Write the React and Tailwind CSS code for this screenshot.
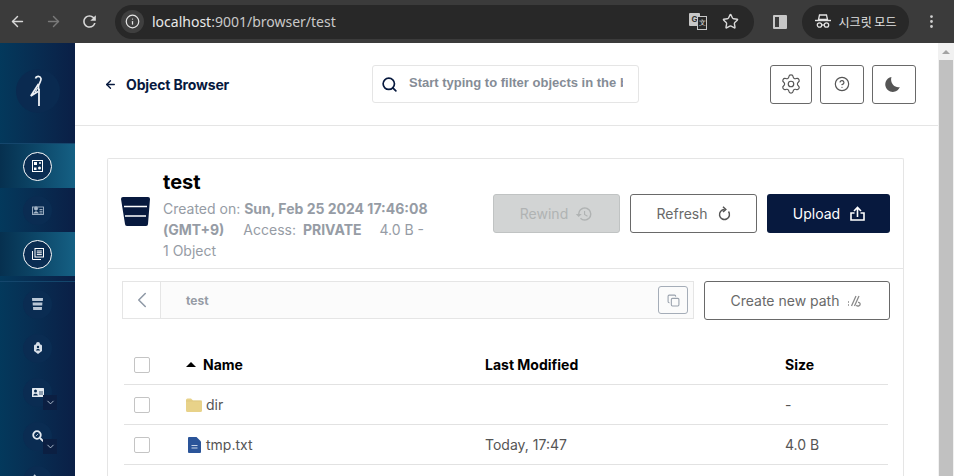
import React from 'react';
import { ArrowLeft, ArrowRight, Info, Star, Settings, CircleHelp, Search, ChevronLeft, ChevronDown, EllipsisVertical, Copy } from 'lucide-react';

const ReloadIcon = ({ size, color }) => (
  <svg width={size} height={size} viewBox="0 0 24 24" fill={color}>
    <path d="M17.65 6.35A7.958 7.958 0 0 0 12 4c-4.42 0-7.99 3.58-7.99 8s3.57 8 7.99 8c3.73 0 6.84-2.55 7.73-6h-2.08A5.99 5.99 0 0 1 12 18c-3.31 0-6-2.69-6-6s2.69-6 6-6c1.66 0 3.14.69 4.22 1.78L13 11h7V4l-2.35 2.35z" />
  </svg>
);

const Bird = () => (
  <svg width="16" height="31" viewBox="0 0 16 31" fill="none" stroke="#eef2f6" strokeWidth="1.700">
    <path d="M5.500 3.500C6 1 10 .5 11 3.500c.6 2.500-2 4.500-2.500 7.500-.2 1.500 0 2.500.5 4" />
    <path d="M9 31V14" strokeWidth="1.800" />
    <path d="M8.500 9 .8 21 8 16.500" />
    <path d="M7.500 13 5 17.500" strokeWidth="1.200" />
  </svg>
);

const Glyph = ({ kind }) => {
  if (kind === 'cluster') return (
    <svg width="11" height="12" viewBox="0 0 11 12" fill="none">
      <rect x=".5" y=".5" width="10" height="11" stroke="#fff" strokeWidth="1" />
      <rect x="2" y="2" width="3" height="3" fill="#fff" />
      <circle cx="8" cy="3" r="1" fill="#fff" />
      <rect x="2" y="7.500" width="2.500" height="2.500" fill="#fff" />
      <circle cx="7.500" cy="8" r="1.500" fill="#fff" />
    </svg>
  );
  if (kind === 'id') return (
    <svg width="12" height="10" viewBox="0 0 12 10" fill="none" stroke="#a9b9ca" strokeWidth=".9">
      <rect x=".5" y="2" width="11" height="7.500" />
      <circle cx="4" cy="3.500" r="1.600" fill="#a9b9ca" />
      <path d="M1.800 8.500c0-2.200 4.400-2.200 4.400 0" fill="#a9b9ca" />
      <path d="M7.500 4.500h3M7.500 6.300h3M7.500 8h3" />
    </svg>
  );
  if (kind === 'docs') return (
    <svg width="12" height="12" viewBox="0 0 12 12" fill="none" stroke="#fff" strokeWidth="1">
      <rect x="3" y=".5" width="8.500" height="8.500" />
      <path d="M.5 3v8.500H9" />
      <path d="M4.800 3h5M4.800 4.800h5M4.800 6.600h5" />
    </svg>
  );
  if (kind === 'bucket') return (
    <svg width="11" height="12" viewBox="0 0 11 12" fill="#b9c7d6">
      <path d="M0 0h11l-.2 3H.2z" />
      <path d="M.6 4.500h9.800l-.2 3H.8z" />
      <path d="M1 9h9l-.2 3H1.200z" />
    </svg>
  );
  if (kind === 'lock') return (
    <svg width="8" height="12" viewBox="0 0 8 12" fill="#d6dfe8">
      <path d="M2 2.500V2a2 2 0 0 1 4 0v.5h1L8 3.500V9l-4 3-4-3V3.500l1-1z" />
      <circle cx="4" cy="5" r="1.200" fill="#07294d" />
      <path d="M2 8.500c0-2 4-2 4 0z" fill="#07294d" />
    </svg>
  );
  if (kind === 'card') return (
    <svg width="12" height="9" viewBox="0 0 12 9">
      <rect width="12" height="9" rx=".5" fill="#e4eaf0" />
      <circle cx="3.500" cy="3" r="1.500" fill="#07294d" />
      <path d="M1.200 7.500c0-2.400 4.600-2.400 4.600 0z" fill="#07294d" />
      <path d="M7 4h4M7 6h4" stroke="#07294d" strokeWidth=".8" />
    </svg>
  );
  if (kind === 'search') return (
    <svg width="12" height="12" viewBox="0 0 12 12" fill="none">
      <circle cx="5" cy="5" r="3.800" stroke="#e4eaf0" strokeWidth="1.800" />
      <path d="m8 8 3.500 3.500" stroke="#e4eaf0" strokeWidth="1.800" />
      <path d="M3.800 6.200 6.200 3.800" stroke="#e4eaf0" strokeWidth=".8" />
    </svg>
  );
  return (
    <svg width="12" height="12" viewBox="0 0 12 12" fill="none">
      <path d="m2 1 6 6" stroke="#c7d3df" strokeWidth="1.800" />
    </svg>
  );
};

const NavItem = ({ kind, active, dropdown }) => (
  <div className={`relative flex h-11 w-full shrink-0 items-center justify-center ${active ? 'bg-gradient-to-r from-[#06304f] to-[#156084]' : ''}`}>
    <div className={`flex h-[29px] w-[29px] items-center justify-center rounded-full ${active ? 'border-[1.5px] border-white bg-[#0a2d52]' : 'bg-[#0a2c52]'}`}>
      <Glyph kind={kind} />
    </div>
    {dropdown && (
      <div className="absolute left-[43px] top-[25px] flex h-[15px] w-[14px] items-center justify-center bg-[#0b1f42]">
        <ChevronDown size={11} color="#b9c7d6" />
      </div>
    )}
  </div>
);

const Sidebar = () => (
  <aside className="flex w-[75px] shrink-0 flex-col bg-gradient-to-r from-[#03395c] to-[#0a1f46]">
    <div className="flex h-[101px] shrink-0 items-center justify-center border-b border-[#14466c]">
      <div className="mb-[5px] flex h-11 w-11 items-center justify-center rounded-full bg-[#0a2a50]">
        <Bird />
      </div>
    </div>
    <NavItem kind="cluster" active />
    <NavItem kind="id" />
    <NavItem kind="docs" active />
    <div className="mt-[5px] h-px shrink-0 bg-[#14466c]" />
    <NavItem kind="bucket" />
    <NavItem kind="lock" />
    <NavItem kind="card" dropdown />
    <NavItem kind="search" dropdown />
    <NavItem kind="more" />
  </aside>
);

const Toolbar = () => (
  <div className="flex h-[43px] shrink-0 items-center bg-[#3b3b3b] text-[#e3e3e3]">
    <div className="flex w-[115px] items-center pl-[9px]">
      <ArrowLeft size={17} color="#d8d8d8" />
      <ArrowRight size={17} color="#7a7a7a" className="ml-[19px]" />
      <div className="ml-[18px]"><ReloadIcon size={19} color="#d8d8d8" /></div>
    </div>
    <div className="flex h-[34px] w-[639px] items-center rounded-full bg-[#282828] pl-[6px]">
      <div className="flex h-[23px] w-[23px] items-center justify-center rounded-full bg-[#3f3f3f]">
        <Info size={15} color="#e6e6e6" />
      </div>
      <span className="ml-[8px] font-['Noto_Sans',sans-serif] text-[14px] text-[#e8e8e8]">
        localhost<span className="text-[#c8c8c8]">:9001/browser/test</span>
      </span>
      <div className="ml-auto flex items-center pr-[15px]">
        <div className="relative mr-[15px] h-[17px] w-[18px]">
          <div className="h-[13px] w-[11px] rounded-[1px] bg-[#c7c7c7] text-center text-[8px] leading-[13px] font-bold text-[#333]">G</div>
          <div className="absolute left-[8px] top-[3px] h-[14px] w-[10px] border border-[#c7c7c7] bg-[#282828] text-center text-[7px] leading-[12px]">文</div>
        </div>
        <Star size={17} color="#d8d8d8" strokeWidth={2} />
      </div>
    </div>
    <div className="ml-[19px] flex h-[14px] w-[14px] rounded-[1px] border-2 border-[#c7c7c7]">
      <div className="ml-auto h-full w-[6px] bg-[#c7c7c7]" />
    </div>
    <div className="ml-[15px] flex h-[34px] w-[107px] items-center justify-center rounded-full bg-[#282828]">
      <svg width="16" height="15" viewBox="0 0 16 15" fill="none" stroke="#e3e3e3" strokeWidth="1.300">
        <path d="M4.500 1h7l1 4.500h-9z" />
        <path d="M0 6.500h16" strokeWidth="1.400" />
        <circle cx="4.500" cy="11" r="2.200" />
        <circle cx="11.500" cy="11" r="2.200" />
        <path d="M6.700 11h2.600" />
      </svg>
      <span className="ml-[8px] font-['Noto_Sans_CJK_KR',sans-serif] text-[12px] text-[#e3e3e3]">시크릿 모드</span>
    </div>
    <EllipsisVertical size={17} color="#d0d0d0" className="ml-[14px]" />
  </div>
);

const IconButton = ({ children, className }) => (
  <button className={`flex h-[39px] items-center justify-center rounded-[3px] border border-[#696969] bg-white ${className}`}>
    {children}
  </button>
);

const Header = () => (
  <header className="flex h-[83px] shrink-0 items-center border-b border-[#e5e5e5] pl-[29px] pr-[22px]">
    <div className="flex w-[268px] items-center">
      <ArrowLeft size={13} color="#07193e" strokeWidth={2.500} />
      <span className="ml-[9px] text-[14px] font-bold tracking-[-0.15px] text-[#07193e]">Object Browser</span>
    </div>
    <div className="flex h-[38px] w-[267px] items-center overflow-hidden rounded-[3px] border border-[#e5e5e5] pl-[8px]">
      <Search size={17} color="#07193e" strokeWidth={2.400} className="shrink-0" />
      <span className="mb-[2px] ml-[11px] w-[214px] overflow-hidden font-['Liberation_Sans',sans-serif] text-[13px] font-bold whitespace-nowrap text-[#858c96]">
        Start typing to filter objects in the bucket
      </span>
    </div>
    <IconButton className="ml-auto w-[42px]"><Settings size={22} color="#555" strokeWidth={1.300} /></IconButton>
    <IconButton className="ml-[8px] w-[44px]"><CircleHelp size={16} color="#555" strokeWidth={1.800} /></IconButton>
    <IconButton className="ml-[8px] w-[44px]">
      <svg width="15" height="15" viewBox="0 0 15 15" className="mr-[3px]"><path d="M6.500 0a7.500 7.500 0 1 0 8.300 10C10 11.500 4.500 6 6.500 0z" fill="#555" /></svg>
    </IconButton>
  </header>
);

const BucketSummary = () => (
  <div className="flex h-[110px] border-b border-[#e5e5e5]">
    <div className="flex w-[55px] shrink-0 items-center justify-center pb-[5px]">
      <svg width="29" height="29" viewBox="0 0 29 29">
        <path d="M0 2a2 2 0 0 1 2-2h25a2 2 0 0 1 2 2l-2 25a2 2 0 0 1-2 2H6a2 2 0 0 1-2-2z" fill="#07193e" />
        <path d="M3 9.500h23M4 19h21" stroke="#fff" strokeWidth="1.600" />
      </svg>
    </div>
    <div className="w-[270px] shrink-0 pt-[10px]">
      <h1 className="text-[20px] leading-[26px] font-bold text-black">test</h1>
      <p className="mt-[3px] text-[14px] leading-[21px] text-[#969ca5]">
        Created on: <b className="font-bold">Sun, Feb 25 2024 17:46:08 (GMT+9)</b>
        <span className="ml-[19px]">Access:</span> <b className="ml-[3px] font-bold">PRIVATE</b>
        <span className="ml-[18px]">4.0 B - 1 Object</span>
      </p>
    </div>
    <div className="ml-auto flex gap-[10px] pt-[35px] pr-[13px]">
      <button className="flex h-[39px] w-[127px] items-center justify-center gap-[7px] rounded-[3px] border border-[#c0c3c3] bg-[#d2d4d4] text-[14px] text-[#b0b3b3]">
        Rewind
        <svg width="18" height="18" viewBox="0 0 24 24" fill="#b0b3b3">
          <path d="M13 3a9 9 0 0 0-9 9H1l3.89 3.89.07.14L9 12H6c0-3.87 3.13-7 7-7s7 3.13 7 7-3.13 7-7 7c-1.93 0-3.68-.79-4.94-2.06l-1.42 1.42A8.954 8.954 0 0 0 13 21a9 9 0 0 0 0-18zm-1 5v5l4.280 2.540.72-1.210-3.500-2.080V8H12z" />
        </svg>
      </button>
      <button className="flex h-[39px] w-[127px] items-center justify-center gap-[10px] rounded-[3px] border border-[#696969] bg-white text-[14px] text-[#696969]">
        Refresh
        <svg width="13" height="15" viewBox="0 0 13 15" fill="none" stroke="#555" strokeWidth="1.500">
          <path d="M10.500 5.500a5 5 0 1 1-4-2" />
          <path d="M5 .8 7.800 3.400 5 6" />
        </svg>
      </button>
      <button className="flex h-[39px] w-[123px] items-center justify-center gap-[10px] rounded-[3px] bg-[#07193e] pl-px text-[14px] text-white">
        Upload
        <svg width="15" height="15" viewBox="0 0 15 15" fill="none" stroke="#fff" strokeWidth="1.600">
          <path d="M7.500 11V1.500M4 5l3.500-3.500L11 5" />
          <path d="M4.500 7H1v7h13V7h-3.500" />
        </svg>
      </button>
    </div>
  </div>
);

const PathBar = () => (
  <div className="flex items-start gap-[10px] pt-[12px] pr-[13px] pl-[14px]">
    <div className="flex h-[38px] w-[572px] items-center border border-[#e5e5e5] bg-[#fbfbfb]">
      <div className="flex h-full w-[38px] shrink-0 items-center justify-center border-r border-[#e5e5e5] bg-white">
        <ChevronLeft size={26} color="#8f99a6" strokeWidth={1.400} />
      </div>
      <span className="mt-px ml-[25px] text-[12px] font-bold text-[#969ca5]">test</span>
      <div className="mr-[5px] ml-auto flex h-[28px] w-[30px] items-center justify-center rounded-[3px] border border-[#a5adb8]">
        <Copy size={13} color="#9aa2ad" />
      </div>
    </div>
    <button className="flex h-[39px] w-[186px] items-center justify-center gap-[8px] rounded-[3px] border border-[#696969] bg-white pr-px text-[14px] text-[#696969]">
      Create new path
      <svg width="15" height="12" viewBox="0 0 15 12" fill="none" stroke="#8a8a8a" strokeWidth="1.300">
        <path d="M4.500 11 9 1M7.500 11 12 1M1 7h1M1 10h1M11 7.500c2.500-.5 3 3 .5 3.500-1 .2-1.800-.3-2-1" />
      </svg>
    </button>
  </div>
);

const Checkbox = () => <div className="h-4 w-4 rounded-[2px] border border-[#c4c4c4]" />;

const Row = ({ icon, name, modified, size, header }) => (
  <div className={`flex h-10 items-center border-b border-[#e2e2e2] text-[14px] ${header ? 'font-bold text-black' : 'text-[#555]'}`}>
    <div className="flex w-[62px] shrink-0 pl-[10px]"><Checkbox /></div>
    <div className="flex w-[299px] shrink-0 items-center">{icon}<span>{name}</span></div>
    <div className="w-[300px] shrink-0">{modified}</div>
    <div>{size}</div>
  </div>
);

const FolderIcon = () => (
  <svg width="16" height="14" viewBox="0 0 16 14" className="mr-[4px]">
    <path d="M0 2a1.500 1.500 0 0 1 1.500-1.500h3.500L7 2.500h7.500A1.500 1.500 0 0 1 16 4v8.500a1.500 1.500 0 0 1-1.500 1.500h-13A1.500 1.500 0 0 1 0 12.500z" fill="#e8d289" />
    <path d="M0 3h16" stroke="#d9c27a" strokeWidth=".6" />
  </svg>
);

const FileIcon = () => (
  <svg width="13" height="16" viewBox="0 0 13 16" className="ml-[2px] mr-[5px]">
    <path d="M1 0h7.500L13 4.500V15a1 1 0 0 1-1 1H1a1 1 0 0 1-1-1V1a1 1 0 0 1 1-1z" fill="#2a5499" />
    <path d="M3.500 8.500h6M3.500 11h6" stroke="#c8d4e8" strokeWidth="1.200" />
  </svg>
);

const ObjectTable = () => (
  <div className="mt-[25px] pl-[16px] pr-[15px]">
    <Row header icon={<span className="mr-[7px] h-0 w-0 border-x-[5.500px] border-b-[5px] border-x-transparent border-b-black" />} name="Name" modified="Last Modified" size="Size" />
    <Row icon={<FolderIcon />} name="dir" modified="" size="-" />
    <Row icon={<FileIcon />} name="tmp.txt" modified="Today, 17:47" size="4.0 B" />
  </div>
);

const Scrollbar = () => (
  <div className="flex w-4 shrink-0 flex-col bg-[#f1f1f1]">
    <div className="flex h-[17px] items-center justify-center">
      <div className="h-0 w-0 border-x-[4px] border-b-[4px] border-x-transparent border-b-[#a3a3a3]" />
    </div>
    <div className="mx-auto h-[416px] w-[14px] bg-[#c1c1c1]" />
  </div>
);

export default function App() {
  return (
    <div className="flex h-[476px] w-[954px] flex-col overflow-hidden bg-white font-['Inter',sans-serif]">
      <Toolbar />
      <div className="flex min-h-0 flex-1">
        <Sidebar />
        <main className="min-w-0 flex-1">
          <Header />
          <section className="mt-[32px] mr-[34px] ml-[32px] h-[400px] rounded-t-[2px] border border-b-0 border-[#e5e5e5]">
            <BucketSummary />
            <PathBar />
            <ObjectTable />
          </section>
        </main>
        <Scrollbar />
      </div>
    </div>
  );
}
